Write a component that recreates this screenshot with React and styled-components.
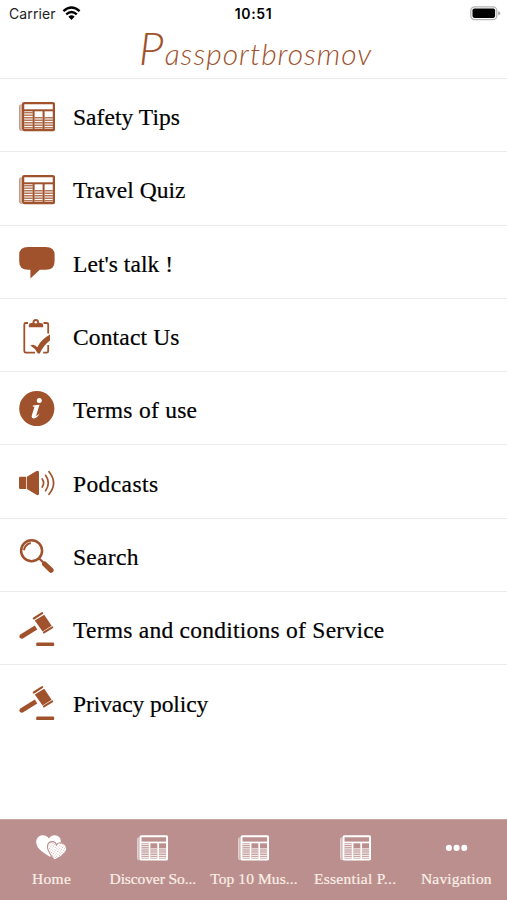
import React from 'react';
import styled, { createGlobalStyle } from 'styled-components';

const SIENNA = '#a0522d';

const MENU = [
  { label: 'Safety Tips', icon: NewsIcon, spacing: 0.05 },
  { label: 'Travel Quiz', icon: NewsIcon, spacing: 0.05 },
  { label: "Let's talk !", icon: TalkIcon, spacing: 0.05 },
  { label: 'Contact Us', icon: ClipboardIcon, spacing: 0.15 },
  { label: 'Terms of use', icon: InfoIcon, spacing: 0.27 },
  { label: 'Podcasts', icon: SpeakerIcon, spacing: 0.4 },
  { label: 'Search', icon: SearchIcon, spacing: 0.3 },
  { label: 'Terms and conditions of Service', icon: GavelIcon, spacing: 0.25 },
  { label: 'Privacy policy', icon: GavelIcon, spacing: -0.08 },
];

const TABS = [
  { label: 'Home', icon: HeartsIcon, spacing: 0.3 },
  { label: 'Discover So...', icon: NewsIcon, spacing: -0.1 },
  { label: 'Top 10 Mus...', icon: NewsIcon, spacing: 0.1 },
  { label: 'Essential P...', icon: NewsIcon, spacing: 0.28 },
  { label: 'Navigation', icon: DotsIcon, spacing: 0.2 },
];

function App() {
  return (
    <Screen>
      <GlobalStyle />
      <Header>
        <StatusBar>
          <Carrier>
            Carrier
            <WifiIcon />
          </Carrier>
          <Clock>10:51</Clock>
          <BatteryIcon />
        </StatusBar>
        <Title>
          <Initial>P</Initial>assportbrosmov
        </Title>
      </Header>

      <Menu>
        {MENU.map(({ label, icon: Icon, spacing }) => (
          <MenuItem key={label}>
            <MenuIcon>
              <Icon />
            </MenuIcon>
            <MenuLabel $spacing={spacing}>{label}</MenuLabel>
          </MenuItem>
        ))}
      </Menu>

      <TabBar>
        {TABS.map(({ label, icon: Icon, spacing }) => (
          <Tab key={label}>
            <TabIcon>
              <Icon />
            </TabIcon>
            <TabLabel $spacing={spacing}>{label}</TabLabel>
          </Tab>
        ))}
      </TabBar>
    </Screen>
  );
}

function NewsIcon() {
  const stripes = [15.7, 18.2, 20.7, 23.2, 25.7, 28.2, 30.7];
  return (
    <svg viewBox="0 0 36 36" fill="none" stroke="currentColor">
      <path d="M3 8.2H1.6Q0.7 8.2 0.7 10V31.5Q0.7 33.2 3 33.2" strokeWidth="1.3" opacity=".6" />
      <path d="M2.2 9V32" strokeWidth="1.8" opacity=".4" />
      <rect x="4.1" y="6.1" width="30.8" height="27" rx="1" strokeWidth="2.3" />
      <path d="M4 13.3H35" strokeWidth="2" />
      <path d="M14.6 13V33M24.6 13V33" strokeWidth="2" />
      {stripes.map((y) => (
        <path
          key={y}
          d={y > 20 ? `M5.2 ${y}H13.7M15.6 ${y}H23.7M25.6 ${y}H33.8` : `M5.2 ${y}H13.7`}
          strokeWidth="1.4"
          opacity=".8"
        />
      ))}
    </svg>
  );
}

function TalkIcon() {
  return (
    <svg viewBox="0 0 36 36" fill="currentColor">
      <path d="M9 3H26.8Q35.6 3 35.6 11V17.5Q35.6 25.8 26.8 25.8H20.8L11.4 34.6V25.8H9Q0.2 25.8 0.2 17.5V11Q0.2 3 9 3Z" />
    </svg>
  );
}

function ClipboardIcon() {
  return (
    <svg viewBox="0 0 36 37" fill="none" stroke="currentColor">
      <path
        d="M9 6H6.7Q5.3 6 5.3 7.5V34Q5.3 35.6 6.8 35.6H16M24.5 6H27.5Q29.2 6 29.2 7.5V16.5M29.2 28V34Q29.2 35.6 27.7 35.6H24.2"
        strokeWidth="1.8"
      />
      <path
        d="M9.8 10.2V8.2Q9.8 6 12.3 6H13.4Q13.4 2 16.9 2Q20.2 2 20.2 6H21.5Q24.2 6 24.2 8.2V10.2Z"
        fill="currentColor"
        stroke="none"
      />
      <circle cx="16.8" cy="5.2" r="1.3" fill="#fff" stroke="none" />
      <path
        d="M11.4 28.6Q15 26.2 18.3 30.2Q22 22.5 31 17.6V23.4Q24.6 28 20.8 36.4H18.9Q15.6 31 11.4 28.6Z"
        fill="currentColor"
        stroke="none"
      />
    </svg>
  );
}

function InfoIcon() {
  return (
    <svg viewBox="0 0 36 36">
      <circle cx="17.8" cy="18.6" r="17.6" fill="currentColor" />
      <circle cx="20.3" cy="10.4" r="2.5" fill="#fff" />
      <path
        d="M13.8 15.4L20.5 14.7L17.2 25.6Q17.2 26.8 20.4 23.6Q18.3 28.7 14.4 28.4Q11.9 28 13 24.7L15.5 16.7L13.8 16.4Z"
        fill="#fff"
      />
    </svg>
  );
}

function SpeakerIcon() {
  return (
    <svg viewBox="0 0 36 36">
      <path d="M1.2 12.8H7.2V25H1.2Q0 25 0 23.7V14.1Q0 12.8 1.2 12.8Z" fill="currentColor" />
      <path d="M7.9 12.8L17 7.2Q20 5.6 20 8.5V29.3Q20 32.2 17 30.6L7.9 25Z" fill="currentColor" />
      <g fill="none" stroke="currentColor" strokeWidth="1.7" strokeLinecap="round">
        <path d="M23.2 15Q26 19 23.2 23" />
        <path d="M26.6 11.3Q32 19 26.6 26.7" />
        <path d="M30 7.7Q39.2 19 30 30.3" />
      </g>
    </svg>
  );
}

function SearchIcon() {
  return (
    <svg viewBox="0 0 36 36" fill="none" stroke="currentColor">
      <circle cx="12.6" cy="13.8" r="10.5" strokeWidth="2.5" />
      <path d="M4.9 13.2Q6 7.3 11.8 6" strokeWidth="2" />
      <path d="M20.5 21.8L24.5 25.8" strokeWidth="2.2" />
      <path d="M25.6 27L32 33.2" strokeWidth="5.2" strokeLinecap="round" />
    </svg>
  );
}

function GavelIcon() {
  return (
    <svg viewBox="0 0 36 37" fill="none" stroke="currentColor" strokeLinecap="round">
      <path d="M14.8 8.5L23.2 3.2M25 22.4L33.2 17.3" strokeWidth="2.1" />
      <path d="M15.8 10.6L25.2 4.8L32.6 15.8L23.6 21.4Z" fill="currentColor" stroke="none" />
      <path d="M1.7 24.2L15.8 15.4L18.3 19.6L3.8 28.4Q1.6 29.2 0.6 27.2Q-0.1 25.5 1.7 24.2Z" fill="currentColor" stroke="none" />
      <rect x="17.2" y="32.6" width="18" height="3.5" rx="1.2" fill="currentColor" stroke="none" />
    </svg>
  );
}

function HeartsIcon() {
  return (
    <svg viewBox="0 0 36 36">
      <defs>
        <pattern id="weave" width="2.4" height="2.4" patternUnits="userSpaceOnUse" patternTransform="rotate(35)">
          <rect width="2.4" height="2.4" fill="#fff" />
          <rect width="1" height="1" fill="#bc8f8f" opacity=".75" />
        </pattern>
      </defs>
      <path
        d="M15 8.7C18.2 3.4 25.2 3.8 28 8.4C30.8 14.5 26.7 22.4 16.3 29.8C9.7 25.4 1.4 21.7 0.3 13.8C-0.5 5 10 1.7 15 8.7Z"
        fill="#fff"
      />
      <path
        d="M23.6 16.2C26.4 11.4 36 13.8 35.6 21.2C34.9 27.6 27.4 30.2 21.4 34C18 28.6 12.2 23 13.4 16.8C14.8 10.9 22.8 11 23.6 16.2Z"
        fill="url(#weave)"
        stroke="#bc8f8f"
        strokeWidth="1.2"
      />
    </svg>
  );
}

function DotsIcon() {
  return (
    <svg viewBox="0 0 36 36" fill="currentColor">
      <circle cx="9.2" cy="19.6" r="3.5" />
      <circle cx="18.1" cy="19.6" r="3.5" />
      <circle cx="27" cy="19.6" r="3.5" />
    </svg>
  );
}

function WifiIcon() {
  return (
    <svg width="19" height="15" viewBox="0 0 19 15" fill="none" stroke="#000" strokeWidth="2.4">
      <path d="M1.4 5.2Q9.5 -2 17.6 5.2" />
      <path d="M4.2 8.4Q9.5 3.8 14.8 8.4" />
      <path d="M6.4 10.7Q9.5 8 12.6 10.7L9.5 14Z" fill="#000" stroke="none" />
    </svg>
  );
}

function BatteryIcon() {
  return (
    <svg width="31" height="15" viewBox="0 0 31 15">
      <rect x="0.8" y="0.8" width="26" height="12.8" rx="3.8" fill="#fff" stroke="#b4b4b4" strokeWidth="1.3" />
      <rect x="2.5" y="2.5" width="22.6" height="9.4" rx="1.8" fill="#000" />
      <path d="M28.2 5Q30.3 5.8 30.3 7.2Q30.3 8.6 28.2 9.4Z" fill="#aaa" />
    </svg>
  );
}

const GlobalStyle = createGlobalStyle`
  *, *::before, *::after {
    box-sizing: border-box;
  }

  body {
    margin: 0;
    background: #fff;
  }

  svg {
    display: block;
  }
`;

const Screen = styled.div`
  display: flex;
  flex-direction: column;
  width: 507px;
  height: 900px;
  overflow: hidden;
  background: #fff;
  color: #000;
  font-family: 'Liberation Serif', serif;
`;

const Header = styled.header`
  flex: none;
  height: 79px;
  border-bottom: 1px solid #e9ebed;
`;

const StatusBar = styled.div`
  display: grid;
  grid-template-columns: 1fr auto 1fr;
  align-items: center;
  height: 27px;
  padding: 0 6px 0 9px;
  font-family: Inter, sans-serif;

  > svg {
    justify-self: end;
  }
`;

const Carrier = styled.div`
  display: flex;
  align-items: center;
  gap: 6px;
  font-size: 14px;
  letter-spacing: 0.1px;
  color: #222;
`;

const Clock = styled.div`
  margin-left: -3px;
  font-size: 14px;
  font-weight: 600;
  letter-spacing: 0.6px;
`;

const Title = styled.h1`
  display: flex;
  justify-content: center;
  align-items: baseline;
  margin: 0;
  padding-left: 4px;
  font-family: Lato, sans-serif;
  font-size: 30px;
  font-style: italic;
  font-weight: 300;
  line-height: 42px;
  letter-spacing: 1px;
  color: ${SIENNA};
`;

const Initial = styled.span`
  font-size: 46px;
`;

const Menu = styled.ul`
  flex: 1;
  margin: 0;
  padding: 0;
  list-style: none;
`;

const MenuItem = styled.li`
  display: flex;
  align-items: center;
  gap: 18px;
  height: 73.3px;
  padding-left: 19px;
  border-bottom: 1px solid #ececec;

  &:last-child {
    border-bottom: none;
  }
`;

const MenuIcon = styled.span`
  width: 36px;
  color: ${SIENNA};
`;

const MenuLabel = styled.span`
  padding-top: 4px;
  font-size: 23.5px;
  line-height: 28px;
  letter-spacing: ${(p) => p.$spacing}px;
  white-space: nowrap;
  -webkit-text-stroke: 0.2px currentColor;
`;

const TabBar = styled.nav`
  flex: none;
  display: grid;
  grid-template-columns: repeat(5, 101.2px);
  height: 81px;
  padding-left: 1px;
  border-top: 1px solid #c9a5a5;
  background: #bc8f8f;
  color: #fff;
`;

const Tab = styled.div`
  display: flex;
  flex-direction: column;
  align-items: center;
  padding-top: 11px;
`;

const TabIcon = styled.span`
  width: 31px;
  height: 31px;
`;

const TabLabel = styled.span`
  margin-top: 7px;
  font-size: 15.5px;
  line-height: 20px;
  letter-spacing: ${(p) => p.$spacing}px;
  color: #faf0e6;
  white-space: nowrap;
  -webkit-text-stroke: 0.2px currentColor;
`;

export default App;
